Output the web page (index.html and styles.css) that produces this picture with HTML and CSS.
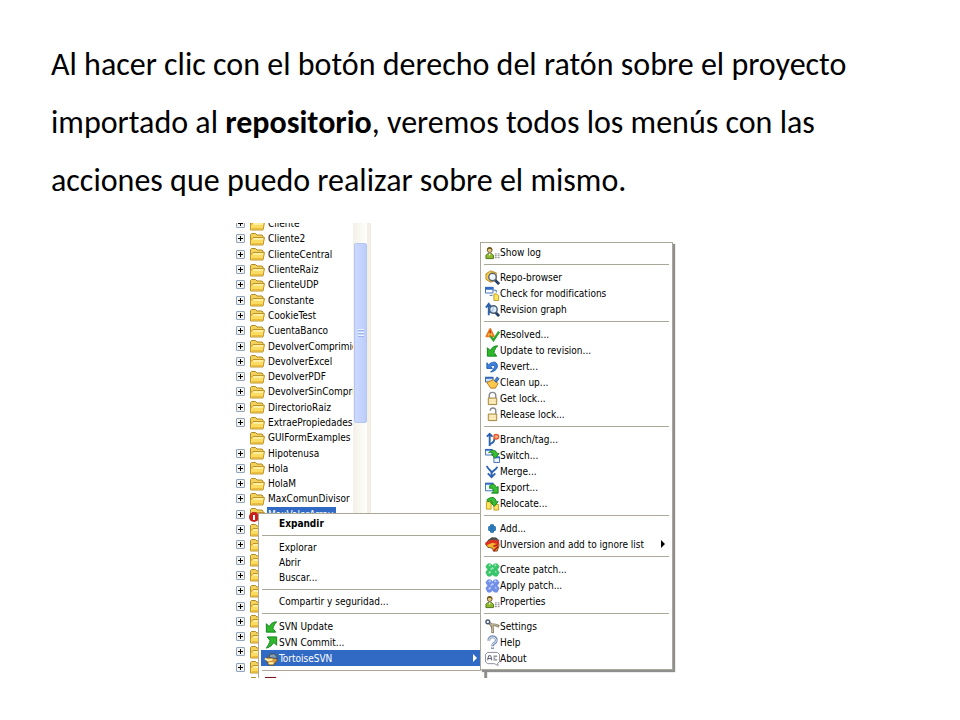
FILE: index.html
```html
<!DOCTYPE html>
<html lang="es">
  <head>
    <meta charset="UTF-8" />
    <meta name="viewport" content="width=device-width, initial-scale=1.0" />
    <title>Menús de TortoiseSVN</title>
    <link rel="stylesheet" href="styles.css">
  </head>
  <body>
    <svg class="sprite" aria-hidden="true">
      <symbol id="folder" viewBox="0 0 16 14">
        <path d="M1.500 12V2.500l1-1h4l1.500 1.500h5l1 1V12z" fill="#f2d15c" stroke="#b08a22" />
        <path d="M4 5.500H15.500L14 13H1.500V8z" fill="#fbdc62" stroke="#c0952a" />
        <path d="M4.500 7h9.500" stroke="#fff5b8" stroke-width="1.500" />
        <path d="M3 11.500h10.500" stroke="#eebb3a" />
      </symbol>
      <symbol id="user" viewBox="0 0 16 16">
        <circle cx="5" cy="5.500" r="2.500" fill="#e8c98c" stroke="#6b5526" />
        <path d="M2 5C2 1 8 1 8 5L5 4z" fill="#6d5a19" />
        <path d="M1 14.500V11l2-2h4l2 2v3.500z" fill="#8dba2b" stroke="#4f6e1c" />
        <path d="M4 9l1 3 1-3" fill="#fff" />
        <path d="M10.500 9.500h2m1 0h2m-5 2h2m1 0h2m-5 2h2m1 0h2" stroke="#777" />
      </symbol>
      <symbol id="repo" viewBox="0 0 16 16">
        <path d="M1 4l5-3 6 2v8l-6 2-5-3z" fill="#f7cb45" stroke="#b78a25" />
        <path d="M10 10l5 5" stroke="#263f66" stroke-width="3" />
        <circle cx="8" cy="7.500" r="4" fill="#e9f4fb" stroke="#5c6678" stroke-width="1.500" />
        <path d="M6 8a2 2 0 0 1 2-2" fill="none" stroke="#fff" stroke-width="1.500" />
      </symbol>
      <symbol id="check" viewBox="0 0 16 16">
        <path d="M.5 1.500h8v6h-8z" fill="#fff" stroke="#3c6db5" />
        <path d="M0 1h9v3H0z" fill="#3169c4" />
        <path d="M9 4.500h3V7M5 10h3" fill="none" stroke="#3c6db5" />
        <path d="M9.500 8.500h3l2 2v5h-5z" fill="#ffe45d" stroke="#bd9b25" />
      </symbol>
      <symbol id="graph" viewBox="0 0 16 16">
        <path d="M4 14V3M1 6l3-4 3 4M4 11c4 0 5-3 5-6" fill="none" stroke="#2d62b0" stroke-width="2" />
        <path d="M11 11l4 4" stroke="#263f66" stroke-width="3" />
        <circle cx="9" cy="8" r="4" fill="#d9ecfb" fill-opacity=".8" stroke="#4c5e77" stroke-width="1.500" />
      </symbol>
      <symbol id="resolved" viewBox="0 0 16 16">
        <path d="M5.500 2l4 8h-8z" fill="#ffe04b" stroke="#ea7a22" stroke-width="2" stroke-linejoin="round" />
        <path d="M5.500 4v3M5.500 8v1" stroke="#c31b12" stroke-width="1.500" />
        <path d="M6 10l3 4 6-9" fill="none" stroke="#2ca52c" stroke-width="2.500" />
      </symbol>
      <symbol id="update" viewBox="0 0 16 16">
        <path d="M2.500 14V5l3 3c2-3 4-5 8-5-2 2-3 4-4 7l3 4z" fill="#2eb82b" stroke="#13821a" stroke-linejoin="round" />
      </symbol>
      <symbol id="commit" viewBox="0 0 16 16">
        <path d="M13.500 2v9l-3-3c-2 3-4 5-8 6 2-3 3-5 4-8l-3-4z" fill="#2eb82b" stroke="#13821a" stroke-linejoin="round" />
      </symbol>
      <symbol id="revert" viewBox="0 0 16 16">
        <path d="M2 4v6h6L6 8c3-2 5-1 4 1-1 2-2 3-4 5 5-1 8-4 7-8-1-4-6-3-9 0z" fill="#3b82dc" stroke="#1f5bab" stroke-linejoin="round" />
      </symbol>
      <symbol id="clean" viewBox="0 0 16 16">
        <path d="M.5 2.500h8v5h-8z" fill="#cfe2fb" stroke="#315f9f" />
        <path d="M0 2h9v2H0z" fill="#3165b6" />
        <path d="M2 8l7-3 5 4-3 5H6z" fill="#ffc94d" stroke="#b97a1b" />
        <path d="M10 6l3-4 2 2-3 4z" fill="#467fc9" stroke="#315f9f" />
      </symbol>
      <symbol id="lock" viewBox="0 0 16 16">
        <path d="M4.500 8V5a3.500 3.500 0 0 1 7 0v3" fill="none" stroke="#85898d" stroke-width="1.500" />
        <path d="M3.500 7.500h9v7h-9z" fill="#f5e2a8" stroke="#a08239" />
        <path d="M5 9.500h6M5 12h6" stroke="#fff4cd" />
      </symbol>
      <symbol id="unlock" viewBox="0 0 16 16">
        <path d="M5.500 4a3 3 0 0 1 6 0v4" fill="none" stroke="#85898d" stroke-width="1.500" />
        <path d="M3.500 7.500h9v7h-9z" fill="#f5e2a8" stroke="#a08239" />
        <path d="M5 9.500h6M5 12h6" stroke="#fff4cd" />
      </symbol>
      <symbol id="branch" viewBox="0 0 16 16">
        <path d="M5 15V3M2 5l3-3 3 3M5 13c4-1 5-3 5-6" fill="none" stroke="#2d62b0" stroke-width="2" />
        <circle cx="12" cy="5" r="2.500" fill="#ffad82" stroke="#ee5525" stroke-width="1.500" />
      </symbol>
      <symbol id="switch" viewBox="0 0 16 16">
        <path d="M.5 1.500h7v6h-7zM9.500 9.500h6v6h-6z" fill="#eef6ff" stroke="#3c6db5" />
        <path d="M0 1h8v2H0zM9 9h7v2H9z" fill="#3169c4" />
        <path d="M4 5c3-4 8-3 9 1h2l-4 5-4-4h2c0-2-3-3-5-2z" fill="#39bd35" stroke="#16851a" />
      </symbol>
      <symbol id="merge" viewBox="0 0 16 16">
        <path d="M2 2c1 4 4 4 5 7v5M13 3c-1 4-5 3-6 7M3 10l4 4 4-4" fill="none" stroke="#2d62b0" stroke-width="2" />
      </symbol>
      <symbol id="export" viewBox="0 0 16 16">
        <path d="M.5 3.500h8v8h-8z" fill="#eef6ff" stroke="#3c6db5" />
        <path d="M0 3h9v2H0z" fill="#3169c4" />
        <path d="M5 6c4-3 6-1 7 2l2-1v7H7l2-2c0-3-2-4-4-3z" fill="#39bd35" stroke="#16851a" />
      </symbol>
      <symbol id="relocate" viewBox="0 0 16 16">
        <path d="M1.500 6h5v8h-5zM9.500 9h5v6h-5z" fill="#ffe45d" stroke="#c29b1e" />
        <path d="M2 4c5-4 9-3 10 2h2l-4 5-4-4h2c0-2-3-2-5-1z" fill="#39bd35" stroke="#16851a" />
      </symbol>
      <symbol id="add" viewBox="0 0 16 16">
        <path d="M6 4h3v2h2v4H9v2H6v-2H4V6h2z" fill="#369ad1" stroke="#1b5c9a" stroke-linejoin="round" />
        <path d="M7.500 5v6M5 8h5" stroke="#2475b8" stroke-width="2" />
      </symbol>
      <symbol id="ignore" viewBox="0 0 16 16">
        <path d="M3 4l5-3 6 3 1 5-2 6H9l-1-3-5-1-2-3z" fill="#f2b52e" stroke="#7c4519" />
        <path d="M3 4l4-3h5l3 3" fill="#555" stroke="#3b4039" />
        <path d="M0 6l7-3 8 1v4L8 6 1 9z" fill="#dd2e23" />
        <path d="M9 10l5-2M9 15l5-5" stroke="#c22119" stroke-width="2" />
      </symbol>
      <symbol id="patch" viewBox="0 0 16 16">
        <path d="M3 2h3l2 2 2-2h3l2 3-2 3 2 3-2 4h-3l-2-2-2 2H3l-2-4 2-3-2-3z" fill="currentColor" stroke="currentColor" stroke-linejoin="round" />
        <path d="M4 4l2-1M10 4l2-1M6 8l3-2M4 12l2-2M11 11l1-1" stroke="#fff" stroke-opacity=".5" stroke-width="2" />
      </symbol>
      <symbol id="settings" viewBox="0 0 16 16">
        <path d="M4 4c4 2 5 5 4 11M6 6c4 1 4-1 9 2" fill="none" stroke="#867c66" stroke-width="3" />
        <path d="M4 4c4 2 5 5 4 10M7 6c4 1 4-1 7 2" fill="none" stroke="#ddd5b6" />
        <circle cx="3" cy="3" r="2" fill="#fff" stroke="#4a5874" stroke-width="1.500" />
      </symbol>
      <symbol id="help" viewBox="0 0 16 16">
        <path d="M4 6c0-6 9-5 8 0 0 3-4 2-4 6M8 13v2" fill="none" stroke="#7891b3" stroke-width="3" />
        <path d="M4 6c0-5 8-5 8 0 0 3-4 2-4 5M8 13v1" fill="none" stroke="#eaf2fc" />
      </symbol>
      <symbol id="about" viewBox="0 0 16 16">
        <path d="M3 1.500h10l2.500 2v8l-2 1.500.5 2.500-4-2H3l-2.500-2v-8z" fill="#fff" stroke="#85879a" />
        <path d="M3 10V8l1-3h2l1 3v2M3 8h4M9 5.500h4M9 7.500h2M9 9.500h4" fill="none" stroke="#53576a" />
      </symbol>
      <symbol id="tortoise" viewBox="0 0 16 16">
        <path d="M2 9l5-6 6 1 1 6-4 5H5z" fill="#d99b3d" stroke="#665126" />
        <path d="M5 7c1-6 9-5 9 1z" fill="#819eb4" stroke="#2f4963" />
        <path d="M1 8l3 2 5-1M5 13h5" fill="none" stroke="#fff0ad" stroke-width="2" />
      </symbol>
      <symbol id="archive" viewBox="0 0 16 16">
        <path d="M1 1h12v4H1z" fill="#7b1720" />
        <path d="M1 5h12v4H1z" fill="#31569b" />
        <path d="M1 9h12v4H1z" fill="#397542" />
      </symbol>
    </svg>

    <main class="slide">
      <p class="lead">Al hacer clic con el botón derecho del ratón sobre el proyecto importado al <strong>repositorio</strong>, veremos todos los menús con las acciones que puedo realizar sobre el mismo.</p>

      <div class="capture">
        <div class="explorer">
          <ul class="tree" id="tree"></ul>
          <div class="scrollbar"><div class="thumb"></div></div>
        </div>

        <ul class="menu context-menu">
          <li><button type="button"><b>Expandir</b></button></li>
          <li class="separator"></li>
          <li><button type="button">Explorar</button></li>
          <li><button type="button">Abrir</button></li>
          <li><button type="button">Buscar...</button></li>
          <li class="separator"></li>
          <li><button type="button">Compartir y seguridad...</button></li>
          <li class="separator"></li>
          <li class="svn"><button type="button"><svg class="icon"><use href="#update" /></svg>SVN Update</button></li>
          <li class="svn"><button type="button"><svg class="icon"><use href="#commit" /></svg>SVN Commit...</button></li>
          <li class="svn"><button type="button" class="active"><svg class="icon"><use href="#tortoise" /></svg>TortoiseSVN<span class="arrow"></span></button></li>
          <li class="separator"></li>
          <li class="svn"><button type="button"><svg class="icon"><use href="#archive" /></svg>Añadir al archivo...</button></li>
        </ul>

        <ul class="menu submenu">
          <li><button type="button"><svg class="icon"><use href="#user" /></svg>Show log</button></li>
          <li class="separator"></li>
          <li><button type="button"><svg class="icon"><use href="#repo" /></svg>Repo-browser</button></li>
          <li><button type="button"><svg class="icon"><use href="#check" /></svg>Check for modifications</button></li>
          <li><button type="button"><svg class="icon"><use href="#graph" /></svg>Revision graph</button></li>
          <li class="separator"></li>
          <li><button type="button"><svg class="icon"><use href="#resolved" /></svg>Resolved...</button></li>
          <li><button type="button"><svg class="icon"><use href="#update" /></svg>Update to revision...</button></li>
          <li><button type="button"><svg class="icon"><use href="#revert" /></svg>Revert...</button></li>
          <li><button type="button"><svg class="icon"><use href="#clean" /></svg>Clean up...</button></li>
          <li><button type="button"><svg class="icon"><use href="#lock" /></svg>Get lock...</button></li>
          <li><button type="button"><svg class="icon"><use href="#unlock" /></svg>Release lock...</button></li>
          <li class="separator"></li>
          <li><button type="button"><svg class="icon"><use href="#branch" /></svg>Branch/tag...</button></li>
          <li><button type="button"><svg class="icon"><use href="#switch" /></svg>Switch...</button></li>
          <li><button type="button"><svg class="icon"><use href="#merge" /></svg>Merge...</button></li>
          <li><button type="button"><svg class="icon"><use href="#export" /></svg>Export...</button></li>
          <li><button type="button"><svg class="icon"><use href="#relocate" /></svg>Relocate...</button></li>
          <li class="separator"></li>
          <li><button type="button"><svg class="icon"><use href="#add" /></svg>Add...</button></li>
          <li><button type="button"><svg class="icon"><use href="#ignore" /></svg>Unversion and add to ignore list<span class="arrow"></span></button></li>
          <li class="separator"></li>
          <li><button type="button"><svg class="icon patch-green"><use href="#patch" /></svg>Create patch...</button></li>
          <li><button type="button"><svg class="icon patch-blue"><use href="#patch" /></svg>Apply patch...</button></li>
          <li><button type="button"><svg class="icon"><use href="#user" /></svg>Properties</button></li>
          <li class="separator"></li>
          <li><button type="button"><svg class="icon"><use href="#settings" /></svg>Settings</button></li>
          <li><button type="button"><svg class="icon"><use href="#help" /></svg>Help</button></li>
          <li><button type="button"><svg class="icon"><use href="#about" /></svg>About</button></li>
        </ul>
      </div>
    </main>

    <script src="script.js"></script>
  </body>
</html>
```
FILE: styles.css
```css
:root {
  --highlight: #316ac5;
  --menu-border: #aca899;
}

body {
  margin: 0;
  background-color: #ffffff;
  color: #000000;
}

.sprite {
  display: none;
}

.slide {
  padding: 36px 51px 0;
}

.lead {
  margin: 0 0 13px;
  font-family: Carlito, Lato, sans-serif;
  font-size: 32px;
  line-height: 58px;
}

.capture {
  position: relative;
  max-width: 488px;
  height: 455px;
  margin: 0 auto;
  overflow: hidden;
  font-family: "DejaVu Sans Condensed", "DejaVu Sans", sans-serif;
  font-size: 10px;
}

.explorer {
  display: flex;
  width: 135px;
  height: 100%;
}

.tree {
  display: flex;
  flex-direction: column;
  flex: 1;
  min-width: 0;
  height: 474px;
  margin: -7px 0 0;
  padding: 0;
  overflow: hidden;
  list-style: none;
}

.tree li {
  display: flex;
  align-items: center;
  flex: 1;
  min-height: 0;
  white-space: nowrap;
}

.toggle {
  flex: none;
  width: 9px;
  height: 9px;
  margin-right: 4px;
  padding: 0;
  border: 1px solid #8fa3bd;
  border-radius: 1px;
  background:
    linear-gradient(#000, #000) center / 5px 1px no-repeat,
    linear-gradient(#000, #000) center / 1px 5px no-repeat,
    #f3f2ec;
}

.toggle.leaf {
  visibility: hidden;
}

.folder-wrap {
  position: relative;
  display: flex;
  flex: none;
  margin-right: 2px;
}

.folder {
  width: 16px;
  height: 14px;
}

.conflict {
  position: absolute;
  left: 0;
  bottom: -1px;
  width: 10px;
  height: 10px;
  border-radius: 50%;
  background: linear-gradient(#fff, #fff) center / 2px 5px no-repeat, #c9201c;
}

.label {
  padding: 0 1px;
  line-height: 15px;
}

.selected .label {
  padding-right: 3px;
  background-color: var(--highlight);
  color: #ffffff;
}

.scrollbar {
  box-sizing: border-box;
  width: 18px;
  padding: 20px 3px 0 1px;
  border-right: 1px solid #efebe0;
  background: linear-gradient(90deg, #f3f1e8, #fefefb 80%, #f3efe4 82%);
}

.thumb {
  box-sizing: border-box;
  height: 180px;
  border: 1px solid #b3c5f3;
  border-radius: 2px;
  background:
    repeating-linear-gradient(#eef4ff 0 1px, #9db5ee 1px 2px, #c4d3fd 2px 3px) center / 6px 8px no-repeat,
    linear-gradient(90deg, #cddafe, #bccdfb);
}

.menu {
  position: absolute;
  box-sizing: border-box;
  margin: 0;
  padding: 2px;
  border: 1px solid var(--menu-border);
  background-color: #ffffff;
  box-shadow: 2px 2px 1px #8e8e8e;
  list-style: none;
}

.menu button {
  display: flex;
  align-items: center;
  width: 100%;
  height: 100%;
  padding: 0;
  border: none;
  background: none;
  color: inherit;
  font: inherit;
  text-align: left;
  white-space: nowrap;
}

.menu li {
  height: 16px;
}

.menu .separator {
  display: flex;
  align-items: center;
  height: 9px;
  margin: 0 1px;
}

.separator::before {
  content: "";
  flex: 1;
  height: 1px;
  background-color: var(--menu-border);
}

.icon {
  flex: none;
  width: 15px;
  height: 15px;
}

.arrow {
  margin: 0 5px 0 auto;
  border: 4px solid transparent;
  border-right: none;
  border-left-color: currentColor;
}

.context-menu {
  top: 290px;
  left: 22px;
  width: 227px;
}

.context-menu li {
  height: 15px;
}

.context-menu .svn {
  height: 16px;
}

.context-menu button {
  padding-left: 18px;
}

.context-menu .svn button {
  padding-left: 3px;
}

.context-menu .active {
  background-color: var(--highlight);
  color: #ffffff;
}

.submenu {
  top: 19px;
  left: 244px;
  width: 193px;
  padding: 1px 2px 3px;
}

.submenu button {
  padding-left: 2px;
}

.patch-green {
  color: #36c568;
}

.patch-blue {
  color: #728fe8;
}
```
FILE: script.js
```js
const folders = [
  "Cliente", "Cliente2", "ClienteCentral", "ClienteRaiz", "ClienteUDP",
  "Constante", "CookieTest", "CuentaBanco", "DevolverComprimidas",
  "DevolverExcel", "DevolverPDF", "DevolverSinComprimir", "DirectorioRaiz",
  "ExtraePropiedades", "GUIFormExamples", "Hipotenusa", "Hola", "HolaM",
  "MaxComunDivisor", "MaxValorArray",
  // folders behind the context menu
  "", "", "", "", "", "", "", "", "", "", ""
];

const tree = document.getElementById("tree");

folders.forEach((name) => {
  const item = document.createElement("li");
  const selected = name === "MaxValorArray";
  const leaf = name === "GUIFormExamples" ? " leaf" : "";
  if (selected) item.className = "selected";
  item.innerHTML = `
    <button type="button" class="toggle${leaf}" aria-label="Expandir carpeta ${name}"></button>
    <span class="folder-wrap">
      <svg class="folder"><use href="#folder" /></svg>
      ${selected ? '<span class="conflict"></span>' : ""}
    </span>
    <span class="label">${name}</span>`;
  tree.appendChild(item);
});
```
